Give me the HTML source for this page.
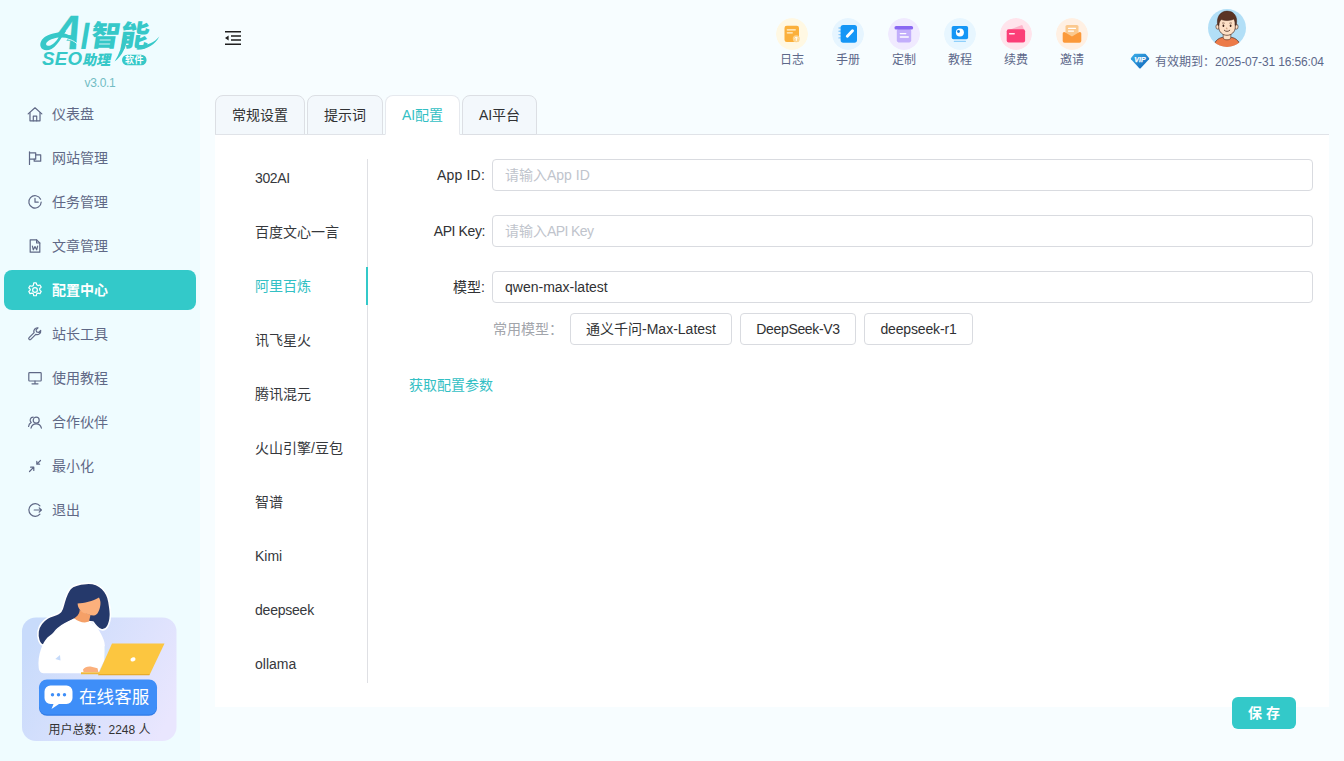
<!DOCTYPE html>
<html lang="zh-CN">
<head>
<meta charset="utf-8">
<title>AI智能SEO助理</title>
<style>
*{box-sizing:border-box;margin:0;padding:0}
html,body{width:1344px;height:761px;overflow:hidden}
body{font-family:"Liberation Sans","Noto Sans CJK SC",sans-serif;font-size:14px;color:#303133;background:#f7fdff;position:relative}
.abs{position:absolute}
/* sidebar */
#side{position:absolute;left:0;top:0;width:200px;height:761px;background:#effcff}
.ver{position:absolute;left:0;width:200px;top:75px;text-align:center;letter-spacing:-.3px;font-size:12px;line-height:16px;color:#72bcc4}
.mi{position:absolute;left:4px;width:192px;height:40px;border-radius:8px;color:#5f6886}
.mi svg{position:absolute;left:23px;top:12px;width:16px;height:16px;stroke:#5f6886;fill:none;stroke-width:1.2;stroke-linecap:round;stroke-linejoin:round}
.mi span{position:absolute;left:48px;top:0;line-height:40px;font-size:14px;white-space:nowrap}
.mi.on{background:#33c9c9;color:#fff}
.mi.on svg{stroke:#fff}
.mi.on span{font-weight:700}
/* header */
.hi{position:absolute;top:18px;width:32px;text-align:center}
.hi .c{width:32px;height:32px;border-radius:50%;display:block}
.hi b{display:block;font-weight:400;font-size:12px;line-height:16px;color:#5d688a;margin-top:2px;white-space:nowrap;margin-left:-10px;margin-right:-10px}
/* tabs */
.tab{position:absolute;top:95px;height:40px;border:1px solid #dcdfe4;border-radius:8px 8px 0 0;background:#f3f8fc;text-align:center;line-height:38px;font-size:14px;color:#303133}
.tab.on{background:#fff;border-color:#e6e9ee;border-bottom-color:#fff;color:#33c0c4}
#panel{position:absolute;left:215px;top:135px;width:1114px;height:572px;background:#fff}
#tabline{position:absolute;left:215px;top:134px;width:1114px;height:1px;background:#e0e3e8}
.pv{position:absolute;left:255px;font-size:14px;line-height:20px;color:#36383c;white-space:nowrap}
.lab{position:absolute;left:385px;width:100px;text-align:right;font-size:14px;line-height:32px;color:#303133;white-space:nowrap}
.inp{position:absolute;left:492px;width:821px;height:32px;border:1px solid #d9dbe0;border-radius:4px;background:#fff;font-size:14px;line-height:30px;padding-left:12px;color:#303133;white-space:nowrap}
.inp.ph{color:#c0c4cc}
.btn{position:absolute;top:313px;height:32px;border:1px solid #d9dbe0;border-radius:4px;background:#fff;font-size:14px;line-height:30px;text-align:center;color:#303133;white-space:nowrap}
</style>
</head>
<body>
<div id="side">
  <div id="logo" style="position:absolute;left:0;top:0;width:200px;height:75px;color:#36c8c8">
    <svg class="abs" style="left:36px;top:10px" width="130" height="62" viewBox="36 10 130 62"><g fill="#36c8c8">
      <path fill-rule="evenodd" d="M63.500 30.500C60 33 52 32.500 45.500 36.500 41.500 39 39.600 43 40.600 46.500 41.800 50.500 47 51.300 51.500 49 55.500 47 58.500 42.500 61.500 37.800L66 31zM58.600 37.400C56 41.500 52.500 45 49.200 45.700 46.500 46.300 45.300 44.600 46.600 42.600 48.500 39.800 53.500 37.900 58.600 37.400z"/>
      <path d="M55 33.600C62 31.600 71.500 33.800 77 42 71.500 38.300 65.500 37.300 59.500 37.600z"/>
      <path d="M123.200 36.500h4.300c-1 9.500-5 19.500-12.900 25 4.600-6.800 7.400-15.500 8.600-25z"/>
      <path d="M136.500 49.600c9.500.600 18.500-4.600 22.800-13.100-4.800 6-12 9-20 9.300z"/>
      <rect x="122" y="54.800" width="24.600" height="10.500" rx="5.250"/></g></svg>
    <span id="lgA" class="abs" style="left:41.600px;top:9.300px;font:700 48px/48px 'Liberation Sans',sans-serif;-webkit-text-stroke:.3px #36c8c8;transform:skewX(-22deg) scaleX(.91);transform-origin:0 100%;clip-path:polygon(-5% 0,110% 0,110% 100%,57% 100%,57% 53%,-5% 53%)">A</span>
    <svg class="abs" style="left:60px;top:34px;z-index:2" width="20" height="14" viewBox="60 34 20 14"><path d="M63.500 38.700C68.500 38.600 73.500 40.200 77.600 44.300" fill="none" stroke="#effcff" stroke-width=".9"/></svg>
    <span id="lgI" class="abs" style="left:77.500px;top:17.200px;font:700 38px/38px 'Liberation Sans',sans-serif;transform:skewX(-9.500deg) scaleX(.8);transform-origin:0 100%">I</span>
    <span id="lgZ" class="abs" style="left:88px;top:15.500px;font:900 29px/40px 'Liberation Sans','Noto Sans CJK SC',sans-serif;transform:skewX(-9deg);transform-origin:0 100%;letter-spacing:0;white-space:nowrap">智能</span>
    <span id="lgS" class="abs" style="left:41.500px;top:48px;font:italic 700 18px/22px 'Liberation Sans',sans-serif;transform:scaleX(1.040);transform-origin:0 0;letter-spacing:.2px">SEO</span>
    <span id="lgL" class="abs" style="left:80.500px;top:48.500px;font:900 14px/22px 'Liberation Sans','Noto Sans CJK SC',sans-serif;transform:skewX(-12deg);transform-origin:0 100%;white-space:nowrap;letter-spacing:0">助理</span>
    <span class="abs" style="left:125px;top:54px;font:700 9px/12px 'Liberation Sans','Noto Sans CJK SC',sans-serif;color:#fff;white-space:nowrap;letter-spacing:.5px">软件</span>
  </div>
  <div class="ver">v3.0.1</div>
  <div id="menu">
  <div class="mi" style="top:94px"><svg viewBox="0 0 16 16"><g transform="translate(8 8.3) scale(1.14) translate(-8 -8)" stroke-width="1.05"><path d="M2 7.6 8 2.3l6 5.3"/><path d="M3.6 6.6v7.1h8.8V6.6"/><path d="M6.5 13.7V9.6h3v4.1"/></g></svg><span>仪表盘</span></div>
  <div class="mi" style="top:138px"><svg viewBox="0 0 16 16"><path d="M2.5 1.8v12.6"/><path d="M2.5 2.8h6.2v6.4H2.5"/><path d="M8.7 4.8h5v6.4H7.2V9.2"/></svg><span>网站管理</span></div>
  <div class="mi" style="top:182px"><svg viewBox="0 0 16 16"><path d="M13.6 5.2A6.2 6.2 0 1 0 14.2 8"/><path d="M8 4.4V8.2h3.2"/></svg><span>任务管理</span></div>
  <div class="mi" style="top:226px"><svg viewBox="0 0 16 16"><path d="M9.6 1.8H3.2v12.4h9.6V5z"/><path d="M9.6 1.8V5h3.2"/><path d="M5.4 8.2l.9 3.6L8 8.6l1.7 3.2.9-3.6"/></svg><span>文章管理</span></div>
  <div class="mi on" style="top:270px"><svg viewBox="0 0 16 16"><g transform="translate(8 8) scale(1.13) translate(-8 -8)" stroke-width="1.06"><circle cx="8" cy="8" r="2.1"/><path d="M6.9 1.7h2.2l.4 1.7 1.2.7 1.7-.5 1.1 1.9-1.3 1.2v1.4l1.3 1.2-1.1 1.9-1.7-.5-1.2.7-.4 1.7H6.9l-.4-1.7-1.2-.7-1.7.5-1.1-1.9 1.3-1.2V7.3L2.5 6.100l1.100-1.900 1.700.500 1.200-.700z"/></g></svg><span>配置中心</span></div>
  <div class="mi" style="top:314px"><svg viewBox="0 0 16 16"><path d="M13.700 4.500a3.600 3.600 0 0 1-4.900 3.900l-5 5a1.200 1.200 0 0 1-1.700-1.700l5-5a3.600 3.600 0 0 1 3.900-4.900L9 3.800l.600 2.100 2.100.600z"/></svg><span>站长工具</span></div>
  <div class="mi" style="top:358px"><svg viewBox="0 0 16 16"><rect x="1.800" y="2.600" width="12.400" height="8.400" rx=".8"/><path d="M8 11v2.800M5 13.800h6"/></svg><span>使用教程</span></div>
  <div class="mi" style="top:402px"><svg viewBox="0 0 16 16"><circle cx="9.200" cy="6.200" r="3"/><path d="M4 14.200a5.300 5.300 0 0 1 10.400 0"/><path d="M6.200 3.200a3 3 0 0 0-2 5.300A5 5 0 0 0 1.600 12.500"/></svg><span>合作伙伴</span></div>
  <div class="mi" style="top:446px"><svg viewBox="0 0 16 16"><path d="M2.500 13.500 6.800 9.200M3.600 9.200h3.200v3.200"/><path d="M13.500 2.500 9.800 6.200M9.800 3.400v2.800h2.800"/></svg><span>最小化</span></div>
  <div class="mi" style="top:490px"><svg viewBox="0 0 16 16"><path d="M12.900 3.800a6.300 6.300 0 1 0 0 8.400"/><path d="M7.200 8h7M12.200 5.800 14.400 8l-2.200 2.200"/></svg><span>退出</span></div>
  </div>
  <div id="kefu" style="position:absolute;left:0;top:575px;width:200px;height:180px">
    <svg class="abs" style="left:10px;top:0" width="180" height="175" viewBox="10 575 180 175"><defs><linearGradient id="kg" x1="0" y1="0.300" x2="1" y2=".7"><stop offset="0" stop-color="#c8dbfb"/><stop offset="1" stop-color="#e9e6fe"/></linearGradient></defs>
      <rect x="22" y="617.500" width="154.500" height="123.500" rx="14" fill="url(#kg)"/>
      <g stroke="#fff" stroke-width="1.600" stroke-linejoin="round"><path d="M86.300 583.400C93 582.800 98.500 585 102.400 588.700 106 592.300 108.300 597 109 602 109.700 606.500 110.700 611 110.400 615.500 110.200 619.500 109.500 623.300 107.700 626.300 106.200 628.800 103.500 630.300 101 629.600 97.500 628.600 95 625 93 622L74 620C68 622 62.500 624.500 58 628.500 54 632 51.500 636.500 49 640.500 47.300 643.200 45 645.600 42.700 645 39 644 37.300 637 38 631.600 39 625.500 43 621 47.400 618.200 52 615.300 58.300 615 60.800 611.500 63 608.500 63.200 605 64.200 602 65.500 597.500 67 592.500 70.200 588.700 74 584.500 80 583.800 86.300 583.400z" fill="#25396b"/></g>
      <path d="M38.700 667.800C38 662 38.800 655 41 649 43.500 642 46.500 638 50 635.600 57 630.500 65 622.500 74.200 618.200L89 621.600C93.500 623.500 97.300 627 99.700 631.600 102 636 103.700 639 104.400 642.300 105.300 646.500 105 653 104.500 660L101 667 98 673.200H43.400C40.500 673.200 39 670.500 38.700 667.800z" fill="#fff"/>
      <path d="M79.600 610C79.800 613 77.500 616.500 74.200 618.200 78 622 85 623.500 89 621.600L90.500 615z" fill="#f5a067"/>
      <path d="M77.600 603.500C84 603 93 601 99 597.400 100.200 599.500 100.800 602 100.400 604.800 100 608 99.300 610.500 98 612.500 97 614.200 95.500 615.700 93.500 615.500 90 615.200 87.500 613.500 83.600 612.900 80.500 611.500 77.800 608 77.600 603.500z" fill="#fbb07c"/>
      <path d="M60 655 55.300 659 60.500 660.500z" fill="#c5dafa"/><path d="M104.600 646 104.500 661 109.500 650.500z" fill="#d3e3fb"/>
      <path d="M83 669.500C84.500 667.300 87.500 666.300 90.500 666.600L97.500 668.300 98.400 672H83.500z" fill="#fbb07c"/>
      <path d="M81 672.300h30l-.500 2H81z" fill="#f0b93a"/>
      <path d="M112 643.500h52.500L150 674H98.500z" fill="#fcc640"/><path d="M98.500 674 150 674l-.600 1.300H98z" fill="#e8ac2c"/>
      <ellipse cx="133" cy="659.300" rx="2.600" ry="2" fill="#fff" transform="rotate(-20 133 659.300)"/>
      <rect x="39" y="680.500" width="118" height="35.300" rx="8" fill="#2f7be6"/><rect x="39" y="679.500" width="118" height="35" rx="8" fill="#3e8ef8"/>
      <path d="M50.500 685.500h16a6 6 0 0 1 6 6v6.500a6 6 0 0 1-6 6H59l-7.500 5 2-5h-3a6 6 0 0 1-6-6v-6.500a6 6 0 0 1 6-6z" fill="#fff"/><circle cx="52.500" cy="694.700" r="1.700" fill="#3e8ef8"/><circle cx="58.500" cy="694.700" r="1.700" fill="#3e8ef8"/><circle cx="64.500" cy="694.700" r="1.700" fill="#3e8ef8"/>
    </svg>
    <div class="abs" style="left:79px;top:110px;font-size:17.500px;line-height:24px;color:#fff;white-space:nowrap;letter-spacing:.1px;font-weight:400">在线客服</div>
    <div class="abs" style="left:22px;top:146.500px;width:155px;text-align:center;font-size:12px;line-height:17px;color:#333;white-space:nowrap">用户总数：2248 人</div>
  </div>
</div>
<div id="header">
  <svg class="abs" style="left:224px;top:30px" width="18" height="16" viewBox="0 0 18 16"><g stroke="#1f1f1f" stroke-width="1.5" stroke-linecap="butt"><path d="M1 1.700h16M7 5.900h10M7 10.100h10M1 14.300h16"/></g><path d="M1 8 4.600 5.600v4.800z" fill="#1f1f1f"/></svg>
  <div class="hi" style="left:776px"><svg class="c" viewBox="0 0 32 32"><circle cx="16" cy="16" r="16" fill="#fff8e3"/><rect x="8.500" y="7.700" width="14.500" height="16.300" rx="2.200" fill="#fbb03b"/><path d="M11.300 11.800h8M11.300 14.800h5" stroke="#fff3d6" stroke-width="1.300" stroke-linecap="round"/><circle cx="20.300" cy="20.800" r="3.500" fill="#fdd58f"/><path d="M20.300 22.800v-3.600M18.800 20.400l1.500-1.500 1.500 1.500" stroke="#fff" stroke-width="1" fill="none"/></svg><b>日志</b></div>
  <div class="hi" style="left:832px"><svg class="c" viewBox="0 0 32 32"><circle cx="16" cy="16" r="16" fill="#e6f5ff"/><path d="M7 10h3M7 13.300h3M7 16.600h3M7 19.900h3" stroke="#8ccbfb" stroke-width="1.400" stroke-linecap="round"/><rect x="8.600" y="7" width="16.400" height="17.700" rx="2.600" fill="#1496f6"/><path d="M15.300 18.200 20.500 12.700" stroke="#fff" stroke-width="2.900" stroke-linecap="round"/></svg><b>手册</b></div>
  <div class="hi" style="left:888px"><svg class="c" viewBox="0 0 32 32"><circle cx="16" cy="16" r="16" fill="#f0eaff"/><rect x="8.800" y="11" width="14.400" height="13.400" rx="1.800" fill="#c2aefb"/><rect x="6.500" y="8" width="18.600" height="3.600" rx="1.600" fill="#8a68f2"/><path d="M12.300 15.600h5.500M12.300 19h8" stroke="#fff" stroke-width="1.300" stroke-linecap="round"/></svg><b>定制</b></div>
  <div class="hi" style="left:944px"><svg class="c" viewBox="0 0 32 32"><circle cx="16" cy="16" r="16" fill="#e7f6ff"/><rect x="7.700" y="8" width="16.400" height="13.200" rx="1.800" fill="#1496f6"/><circle cx="15.900" cy="14.400" r="4" fill="#fff"/><circle cx="14.500" cy="13.500" r="1.400" fill="#1680dc"/><path d="M10.300 23.300h11.200" stroke="#8fd0fb" stroke-width="1.200" stroke-linecap="round"/></svg><b>教程</b></div>
  <div class="hi" style="left:1000px"><svg class="c" viewBox="0 0 32 32"><circle cx="16" cy="16" r="16" fill="#ffe4ec"/><path d="M9.500 11.700 21.300 7.200a1 1 0 0 1 1.300.600l1.600 4.500z" fill="#fdb3c9"/><rect x="6.700" y="11.200" width="18.400" height="13.300" rx="2" fill="#fb3e77"/><path d="M9.600 15.800h4.600" stroke="#ffe6ee" stroke-width="1.500" stroke-linecap="round"/></svg><b>续费</b></div>
  <div class="hi" style="left:1056px"><svg class="c" viewBox="0 0 32 32"><circle cx="16" cy="16" r="16" fill="#fff0e3"/><rect x="9.500" y="7" width="13" height="12" rx="1.600" fill="#fbc98e"/><path d="M12.500 10.300h7M12.500 13.100h5" stroke="#fff" stroke-width="1.300" stroke-linecap="round"/><path d="M6.700 15.600a1.500 1.500 0 0 1 2.200-1.300L16 18.600l7.100-4.300a1.500 1.500 0 0 1 2.200 1.300v7.300a1.800 1.800 0 0 1-1.800 1.800H8.500a1.800 1.800 0 0 1-1.800-1.800z" fill="#fb993a"/></svg><b>邀请</b></div>
  <svg class="abs" style="left:1208px;top:9px" width="38" height="38" viewBox="0 0 38 38"><defs><clipPath id="av"><circle cx="19" cy="19" r="19"/></clipPath></defs><circle cx="19" cy="19" r="19" fill="#b2dff7"/><g clip-path="url(#av)"><path d="M5.500 39c0-6 4.500-10 9-10.600h9c4.500.600 9 4.600 9 10.600z" fill="#ec7a48" stroke="#4a2a20" stroke-width=".7"/><path d="M15.200 24.500v4.300c0 1.100 1.700 2 3.800 2s3.800-.900 3.800-2v-4.300z" fill="#fde0c6" stroke="#4a2a20" stroke-width=".6"/><ellipse cx="9.800" cy="17.700" rx="1.900" ry="2.500" fill="#fde0c6" stroke="#4a2a20" stroke-width=".6"/><ellipse cx="28.200" cy="17.700" rx="1.900" ry="2.500" fill="#fde0c6" stroke="#4a2a20" stroke-width=".6"/><path d="M10.700 13.500c0-5 3.500-7.500 8.300-7.500s8.300 2.500 8.300 7.500v4.500c0 5-4 8.300-8.300 8.300s-8.300-3.300-8.300-8.300z" fill="#fde0c6" stroke="#4a2a20" stroke-width=".7"/><path d="M9.800 16.300c-1.800-7.300 2.200-14.200 9.200-14.200 3.200 0 5.800 1.100 7.400 3.100 2.300 2.600 2.800 6.600 1.800 11.100l-1-.100c.200-2.600-.300-4.600-1.400-6.100-3 1.700-8.300 2-12.600.500-1.400 1.400-2.300 3.200-2.400 5.800z" fill="#5b3424" stroke="#3e2218" stroke-width=".5"/><ellipse cx="15.400" cy="16.700" rx=".9" ry="1.300" fill="#3a2018"/><ellipse cx="22.600" cy="16.700" rx=".9" ry="1.300" fill="#3a2018"/><path d="M14 14.300c.8-.5 1.900-.5 2.700 0M21.300 14.300c.8-.5 1.900-.5 2.700 0" stroke="#5b3424" stroke-width=".6" fill="none"/><path d="M18.600 18.500l-.3 1.300h1.300" stroke="#b8805e" stroke-width=".6" fill="none"/><path d="M16.300 21.300c1.500 1.500 4 1.500 5.500 0" stroke="#4a2a20" stroke-width=".8" fill="none" stroke-linecap="round"/></g></svg>
  <svg class="abs" style="left:1130px;top:53px" width="20" height="16" viewBox="0 0 20 16"><defs><linearGradient id="vg" x1="0" y1="0" x2="1" y2="1"><stop offset="0" stop-color="#3fb0ea"/><stop offset="1" stop-color="#0a62b8"/></linearGradient></defs><path d="M5 .700h10a1 1 0 0 1 .7.300l3.300 4a1 1 0 0 1 0 1.200l-8.300 9a1 1 0 0 1-1.400 0L1 6.200a1 1 0 0 1 0-1.200l3.300-4A1 1 0 0 1 5 .700z" fill="url(#vg)"/><text x="10" y="8.600" font-family="Liberation Sans,sans-serif" font-weight="700" font-style="italic" font-size="7" fill="#fff" stroke="#fff" stroke-width=".25" text-anchor="middle">VIP</text></svg>
  <div class="abs" style="left:1155px;top:54px;font-size:12px;line-height:17px;color:#5d688a;white-space:nowrap" id="vipt">有效期到：<span style="letter-spacing:-.14px">2025-07-31 16:56:04</span></div>
</div>
<div id="tabs">
  <div class="tab" style="left:215px;width:90px">常规设置</div>
  <div class="tab" style="left:307px;width:76px">提示词</div>
  <div id="tabline"></div>
  <div class="tab on" style="left:385px;width:75px">AI配置</div>
  <div class="tab" style="left:462px;width:75px">AI平台</div>
</div>
<div id="panel"></div>
<div id="content">
  <div class="abs" style="left:367px;top:159px;width:1px;height:524px;background:#dfe0e4"></div>
  <div class="abs" style="left:366px;top:267px;width:2px;height:38px;background:#33c9c9"></div>
  <div class="pv" style="top:168px;letter-spacing:-.35px">302AI</div>
  <div class="pv" style="top:222px">百度文心一言</div>
  <div class="pv" style="top:276px;color:#33c0c4">阿里百炼</div>
  <div class="pv" style="top:330px">讯飞星火</div>
  <div class="pv" style="top:384px">腾讯混元</div>
  <div class="pv" style="top:438px">火山引擎/豆包</div>
  <div class="pv" style="top:492px">智谱</div>
  <div class="pv" style="top:546px">Kimi</div>
  <div class="pv" style="top:600px;letter-spacing:-.22px">deepseek</div>
  <div class="pv" style="top:654px">ollama</div>
  <div class="lab" style="top:159px;letter-spacing:.2px">App ID:</div><div class="inp ph" style="top:159px">请输入App ID</div>
  <div class="lab" style="top:215px;letter-spacing:-.4px">API Key:</div><div class="inp ph" style="top:215px">请输入<span style="letter-spacing:-.6px">API Key</span></div>
  <div class="lab" style="top:271px">模型:</div><div class="inp" style="top:271px">qwen-max-latest</div>
  <div class="abs" style="left:493px;top:313px;font-size:14px;line-height:32px;color:#a2a5ab;white-space:nowrap">常用模型：</div>
  <div class="btn" style="left:570px;width:162px">通义千问-Max-Latest</div>
  <div class="btn" style="left:740px;width:116px;letter-spacing:-.35px">DeepSeek-V3</div>
  <div class="btn" style="left:864px;width:109px;letter-spacing:-.15px">deepseek-r1</div>
  <div class="abs" style="left:409px;top:375px;font-size:14px;line-height:20px;color:#33c0c4;white-space:nowrap">获取配置参数</div>
  <div class="abs" style="left:1232px;top:697px;width:64px;height:32px;border-radius:6px;background:#33c9c9;color:#fff;font-size:14px;font-weight:700;line-height:32px;text-align:center;white-space:nowrap;word-spacing:0">保 存</div>
</div>
</body>
</html>
